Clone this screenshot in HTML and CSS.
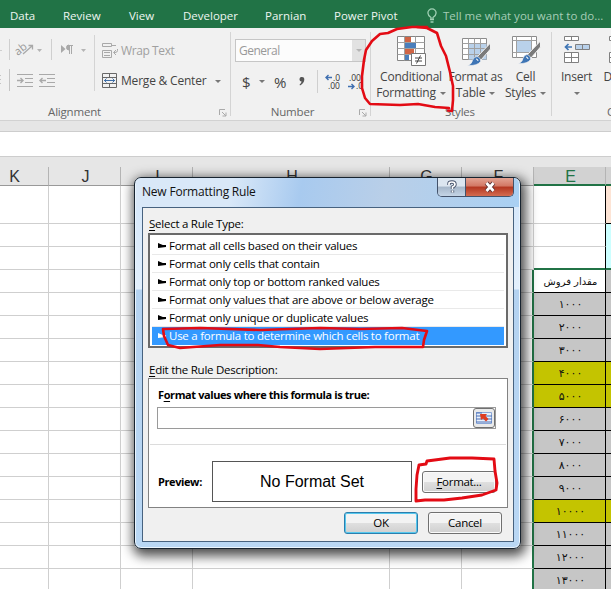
FILE: index.html
```html
<!DOCTYPE html>
<html lang="en">
<head>
<meta charset="utf-8">
<title>New Formatting Rule</title>
<link rel="stylesheet" href="styles.css">
</head>
<body>
<div class="app">
  <nav class="tabs">
    <span class="t-data">Data</span><span class="t-review">Review</span><span class="t-view">View</span><span class="t-dev">Developer</span><span class="t-parnian">Parnian</span><span class="t-pivot">Power Pivot</span>
    <svg class="bulb" width="16" height="16" viewBox="0 0 16 16" fill="none" stroke="#9fd0b4" stroke-width="1.3"><path d="M4 11V9.500C2 8 .9 7 .9 5a4.100 4.100 0 0 1 8.200 0c0 2-1.100 3-3.100 4.500V11M3 11.500h4M3.500 14h3"/></svg>
    <span class="tell">Tell me what you want to do...</span>
  </nav>

  <div class="ribbon">
    <section class="group alignment">
      <div class="controls">
        <div class="left">
          <div class="line">
            <svg width="94" height="30" viewBox="0 0 94 30" fill="none" stroke="#a9a9a9">
              <path d="M0 15.500h2M9.500 4v21M51.500 4v21" stroke="#cfcfcf"/>
              <text x="15" y="17" transform="rotate(-38 22 15)" class="ab">ab</text>
              <path d="M23 19l9-8M28.500 10.500h4v4" stroke-width="1.300"/>
              <path d="M37 14h5l-2.500 3zM81 14h5l-2.500 3z" fill="#b5b5b5" stroke="none"/>
              <path d="M61 10l4.500 4-4.500 4z" fill="#a9a9a9" stroke="none"/>
              <path d="M67 10.500h6M69.500 10v9M71.500 10v9"/><path d="M69 10a2.500 2.500 0 0 0 0 5z" fill="#a9a9a9"/>
            </svg>
          </div>
          <div class="line">
            <svg width="94" height="30" viewBox="0 0 94 30" fill="none" stroke="#a9a9a9">
              <path d="M0 10.500h1M0 14.500h1M0 18.500h1M9.500 4v22" stroke="#c4c4c4"/>
              <path d="M17 9.500h16M25 13.500h8M25 17.500h8M17 21.500h16M39 9.500h16M47 13.500h8M47 17.500h8M39 21.500h16"/>
              <path d="M17 15.500h6M20.500 13l2.500 2.500-2.500 2.500M46 15.500h-6M42.500 13L40 15.500l2.500 2.500" stroke-width="1.400"/>
            </svg>
          </div>
        </div>
        <div class="right">
          <div class="line disabled">
            <svg width="18" height="18" viewBox="0 0 18 18" fill="none" stroke="#a9a9a9"><path d="M1.500 1.500h9v3h-9zM1.500 8.500h9v7h-9zM3 10.500h6M3 13.500h6M11 3.500h4M16.500 7v1.500q0 2-2.500 2h-1M15 8l-2.500 2.500L15 13"/></svg>
            <span class="wrap-text">Wrap Text</span>
          </div>
          <div class="line">
            <svg width="18" height="18" viewBox="0 0 18 18" fill="none" stroke="#686868"><path d="M1.500 1.500h14v14h-14zM1.500 5.500h14M1.500 11.500h14M8.500 1.500v4M8.500 11.500v4"/><path d="M3 8.500h11M5.500 6.500l-2 2 2 2M11.500 6.500l2 2-2 2" stroke="#3f6fa8"/></svg>
            <span class="merge">Merge &amp; Center</span><i class="caret"></i>
          </div>
        </div>
      </div>
      <footer><span>Alignment</span><svg class="launcher" width="8" height="8" viewBox="0 0 8 8" fill="none" stroke="#aaa"><path d="M.5 6V.5H6M3 3l4 4M7 3.500V7H3.500"/></svg></footer>
    </section>

    <section class="group number">
      <div class="controls">
        <div class="combo"><span>General</span><b><i class="caret"></i></b></div>
        <div class="formats">
          <span class="dollar">$</span><i class="caret"></i><span class="percent">%</span><svg class="comma" width="6" height="9" viewBox="0 0 6 9"><path d="M3 0a2.300 2.300 0 0 1 2.300 2.500Q5.300 6 1 8.500L.6 7.500Q2.500 6 2.600 4.600A2.300 2.300 0 0 1 3 0z" fill="#555"/></svg><i class="rule"></i>
          <svg width="40" height="20" viewBox="0 0 40 20"><g class="dec"><text x="8" y="9">.0</text><text x="3" y="17">.00</text><text x="24" y="9">.00</text><text x="31" y="17">.0</text></g><path d="M7 5.500H1M3.500 3L1 5.500 3.500 8M23 14.500h6M26.500 12l2.500 2.500-2.500 2.500" fill="none" stroke="#3f6fb0" stroke-width="1.400"/></svg>
        </div>
      </div>
      <footer><span>Number</span><svg class="launcher" width="8" height="8" viewBox="0 0 8 8" fill="none" stroke="#aaa"><path d="M.5 6V.5H6M3 3l4 4M7 3.500V7H3.500"/></svg></footer>
    </section>

    <section class="group styles">
      <div class="controls">
        <div class="big cond">
          <svg width="32" height="32" viewBox="0 0 32 32"><path d="M2.500 1.500h27v24h-27z" fill="#fff" stroke="#858585"/><path d="M2.500 7.500h27M2.500 13.500h27M2.500 19.500h27M9.500 1.500v24M20.500 1.500v24" stroke="#a0a0a0"/><path d="M10 2h6v5h-6zM10 14h9v5h-9z" fill="#d06445"/><path d="M10 8h11v5H10zM10 20h4v5h-4z" fill="#4a7ebb"/><path d="M16.500 18.500h14v12h-14z" fill="#fff" stroke="#777"/><path d="M20 23h7M20 26h7M25.500 20.500l-4 8" stroke="#444" fill="none"/></svg>
          <span>Conditional</span><span>Formatting<i class="caret"></i></span>
        </div>
        <div class="big tbl">
          <svg width="32" height="32" viewBox="0 0 32 32"><path d="M3.500 3.500h24v21h-24z" fill="#fff" stroke="#8c8c8c"/><path d="M9.500 9h18v15.500h-18z" fill="#b9d1ea"/><path d="M3.500 8.500h24M3.500 13.500h24M3.500 19.500h24M9.500 3.500v21M15.500 3.500v21M21.500 3.500v21" stroke="#a0a0a0"/><path d="M31.500 8v6L22 25l-3.500-3.500z" fill="#7a7a7a" stroke="#f1f1f1"/><path d="M18 21.500q4 1 3.500 5-3 4.500-13 4 4.500-1.500 5-5 1-3.500 4.500-4z" fill="#3e75b5" stroke="#f1f1f1" stroke-width=".6"/><path d="M17 24q2 0 2 2" fill="none" stroke="#fff"/></svg>
          <span>Format as</span><span>Table<i class="caret"></i></span>
        </div>
        <div class="big cell">
          <svg width="32" height="32" viewBox="0 0 32 32"><path d="M3.500 1.500h24v21h-24z" fill="#fff" stroke="#8c8c8c"/><path d="M8 6h14v11H8z" fill="#b9d1ea"/><path d="M3.500 5.500h24M3.500 17.500h24M7.500 1.500v21M22.500 1.500v21" stroke="#a0a0a0"/><path d="M31.500 6v6L22 23l-3.500-3.500z" fill="#7a7a7a" stroke="#f1f1f1"/><path d="M18 19.500q4 1 3.500 5-3 4.500-12 4 4-1.500 4.500-5 1-3.500 4-4z" fill="#3e75b5" stroke="#f1f1f1" stroke-width=".6"/><path d="M17 22q2 0 2 2" fill="none" stroke="#fff"/></svg>
          <span>Cell</span><span>Styles<i class="caret"></i></span>
        </div>
      </div>
      <footer><span>Styles</span></footer>
    </section>

    <section class="group cells">
      <div class="controls">
        <div class="big insert">
          <svg width="32" height="32" viewBox="0 0 32 32" fill="#fff" stroke="#808080"><path d="M4.500 1.500h14v4h-14zM11.500 1.500v4M4.500 17.500h14v10h-14zM4.500 22.500h14M11.500 17.500v10"/><path d="M15.500 9.500h14v5h-14zM22.500 9.500v5" fill="#b9d1ea"/><path d="M12 12H6M8.500 9L5.500 12l3 3" fill="none" stroke="#3e75b5" stroke-width="1.700"/></svg>
          <span>Insert</span><span><i class="caret lone"></i></span>
        </div>
        <div class="big delete">
          <svg width="32" height="32" viewBox="0 0 32 32" fill="#fff" stroke="#808080"><path d="M4.500 1.500h14v4h-14zM4.500 17.500h14v10h-14zM4.500 22.500h14"/></svg>
          <span>Delete</span>
        </div>
      </div>
      <footer><span>Cells</span></footer>
    </section>
  </div>

  <div class="formula-bar"></div>

  <div class="sheet">
    <div class="row head"><i>K</i><i>J</i><i>I</i><i>H</i><i>G</i><i>F</i><i class="sel">E</i><i class="sel"></i></div>
    <div class="row tall"><i></i><i></i><i></i><i></i><i></i><i></i><i class="edge"></i><i class="peach"></i></div>
    <div class="row"><i></i><i></i><i></i><i></i><i></i><i></i><i class="edge"></i><i class="cyan"></i></div>
    <div class="row"><i></i><i></i><i></i><i></i><i></i><i></i><i class="edge last"></i><i class="cyan last"></i></div>
    <div class="row data title"><i></i><i></i><i></i><i></i><i></i><i></i><i lang="fa">مقدار فروش</i><i></i></div>
    <div class="row data"><i></i><i></i><i></i><i></i><i></i><i></i><i>۱۰۰۰</i><i></i></div>
    <div class="row data"><i></i><i></i><i></i><i></i><i></i><i></i><i>۲۰۰۰</i><i></i></div>
    <div class="row data"><i></i><i></i><i></i><i></i><i></i><i></i><i>۳۰۰۰</i><i></i></div>
    <div class="row data hit"><i></i><i></i><i></i><i></i><i></i><i></i><i>۴۰۰۰</i><i></i></div>
    <div class="row data hit"><i></i><i></i><i></i><i></i><i></i><i></i><i>۵۰۰۰</i><i></i></div>
    <div class="row data"><i></i><i></i><i></i><i></i><i></i><i></i><i>۶۰۰۰</i><i></i></div>
    <div class="row data"><i></i><i></i><i></i><i></i><i></i><i></i><i>۷۰۰۰</i><i></i></div>
    <div class="row data"><i></i><i></i><i></i><i></i><i></i><i></i><i>۸۰۰۰</i><i></i></div>
    <div class="row data"><i></i><i></i><i></i><i></i><i></i><i></i><i>۹۰۰۰</i><i></i></div>
    <div class="row data hit"><i></i><i></i><i></i><i></i><i></i><i></i><i>۱۰۰۰۰</i><i></i></div>
    <div class="row data"><i></i><i></i><i></i><i></i><i></i><i></i><i>۱۱۰۰۰</i><i></i></div>
    <div class="row data"><i></i><i></i><i></i><i></i><i></i><i></i><i>۱۲۰۰۰</i><i></i></div>
    <div class="row data"><i></i><i></i><i></i><i></i><i></i><i></i><i>۱۳۰۰۰</i><i></i></div>
  </div>

  <div class="dialog">
    <header>
      <h1>New Formatting Rule</h1>
      <div class="winbtns">
        <span class="help"><svg width="12" height="14" viewBox="0 0 12 14" fill="none"><path d="M3 5V3.500Q3 2 6 2t3 2.500Q9 6 6.500 7v2M6.500 10.500v2" stroke="#47536b" stroke-width="3.400"/><path d="M3 5V3.500Q3 2 6 2t3 2.500Q9 6 6.500 7v2M6.500 10.500v2" stroke="#fff" stroke-width="1.700"/></svg></span>
        <span class="close"><svg width="14" height="12" viewBox="0 0 14 12" fill="none"><path d="M3.500 2l7 8M10.500 2l-7 8" stroke="#5b3030" stroke-width="4.600"/><path d="M3.500 2l7 8M10.500 2l-7 8" stroke="#fff" stroke-width="2.700"/></svg></span>
      </div>
    </header>
    <div class="body">
      <p class="lbl select-label"><u>S</u>elect a Rule Type:</p>
      <ul class="rules">
        <li>Format all cells based on their values</li>
        <li>Format only cells that contain</li>
        <li>Format only top or bottom ranked values</li>
        <li>Format only values that are above or below average</li>
        <li>Format only unique or duplicate values</li>
        <li class="on">Use a formula to determine which cells to format</li>
      </ul>
      <p class="lbl edit-label"><u>E</u>dit the Rule Description:</p>
      <div class="desc">
        <p class="bold true">F<u>o</u>rmat values where this formula is true:</p>
        <div class="input"><span class="picker"><svg width="16" height="14" viewBox="0 0 16 14"><path d="M.5 1.500h15v11H.5z" fill="#e8f0fb" stroke="#8aa6d6"/><path d="M0 2h6M0 5h16M0 8h16M0 11h16" stroke="#4a6eb5" stroke-width="1.200"/><path d="M4 3h7L9.500 5l3 3-2.500 2.500-3-3L5 9z" fill="#df3c20"/></svg></span></div>
        <div class="preview">
          <span class="bold">Preview:</span>
          <div class="sample">No Format Set</div>
          <button class="fmt"><u>F</u>ormat...</button>
        </div>
      </div>
      <div class="actions"><button class="ok">OK</button><button class="cancel">Cancel</button></div>
    </div>
  </div>

  <svg class="ink" width="611" height="589" viewBox="0 0 611 589" fill="none" stroke="#e30b14" stroke-linecap="round" stroke-linejoin="round">
    <path stroke-width="2.600" d="M427 27L412 27L397 29L388 33L380 34L372 41L366 50L364 60L362 76L362 88L365 98L370 104L400 105L418 104L435 107L449 108"/>
    <path stroke-width="2.600" d="M417 27L427 28L437 33L441 46L446 56L450 72L453 86L453 100L452 111L448 110.500"/>
    <path stroke-width="2.600" d="M164 329L200 328L260 330L320 328L360 329L402 328L427 331L424 340L423 347L375 347L320 349L280 347L258 345L220 345L180 348L168 345L164 336L163 329"/>
    <path stroke-width="2.900" d="M419 465L426 464L427 461L450 458L472 458L494 459L495 471L497 483L496 490L482 495L462 498L444 500L425 500L416 501L416 489L417 475L419 465"/>
  </svg>
</div>
</body>
</html>
```
FILE: styles.css
```css
* { box-sizing: border-box; }
body { margin: 0; font: 12px/16px "Open Sans", "Noto Sans", sans-serif; color: #444; }
p, ul, h1 { margin: 0; padding: 0; }
i { font-style: normal; }
span, li, p, h1, button { white-space: nowrap; }
svg { display: block; flex: none; }
.app { position: relative; width: 611px; height: 589px; overflow: hidden; background: #e6e6e6; }

.tabs { display: flex; align-items: center; height: 28px; padding: 3px 0 0 10px; background: #217346; color: #eef6f1; font-size: 11.5px; }
.tabs span { flex: none; }
.t-data { width: 53px; }
.t-review { width: 66px; }
.t-view { width: 54px; }
.t-dev { width: 82px; }
.t-parnian { width: 69px; }
.t-pivot { width: 93px; }
.tabs .tell { color: #a6cdb6; }

.ribbon { display: flex; height: 93px; background: #f1f1f1; border-bottom: 1px solid #d2d2d2; overflow: hidden; }
.group { position: relative; flex: none; display: flex; flex-direction: column; padding-top: 7px; }
.group::after { content: ""; position: absolute; right: 0; top: 4px; height: 84px; width: 1px; background: #d4d4d4; }
.alignment { width: 231px; }
.number { width: 140px; }
.styles { width: 181px; }
.cells { width: 117px; }
.controls { height: 69px; }
footer { display: flex; align-items: center; justify-content: center; height: 16px; color: #666; font-size: 11.5px; letter-spacing: -.2px; position: relative; }
.alignment footer { padding-right: 82px; }
.number footer { padding-right: 0; padding-right: 17px; }
.styles footer { padding-right: 3px; }
.launcher { position: absolute; right: 4px; top: 5px; }
.caret { display: inline-block; flex: none; border: 3px solid transparent; border-top: 3px solid #777; border-bottom: 0; }
.alignment .controls { display: flex; }
.alignment .left { width: 95px; border-right: 1px solid #d4d4d4; height: 56px; }
.right { padding-left: 6px; }
.line { display: flex; align-items: center; height: 30px; }
.right .line { gap: 2px; padding-top: 1px; }
.right .line + .line { padding-top: 2px; }
.ab { font: 11px "Open Sans"; fill: #999; stroke: none; }
.disabled { color: #a0a0a0; }
.wrap-text { letter-spacing: -.4px; }
.merge { letter-spacing: -.2px; }
.merge + .caret { margin-left: 7px; }
.combo { display: flex; justify-content: space-between; width: 131px; height: 23px; margin: 4px 0 0 4px; border: 1px solid #c6c6c6; background: #fcfcfc; color: #999; line-height: 22px; padding-left: 3px; letter-spacing: -.5px; }
.combo b { width: 13px; background: #e2e2e2; display: flex; align-items: center; justify-content: center; }
.combo .caret { border-top-color: #b5b5b5; }
.formats { display: flex; align-items: center; height: 39px; padding-left: 11px; }
.dollar { width: 17px; font-size: 15px; }
.percent { width: 25px; margin-left: 9px; font-size: 15px; }
.comma { margin-right: 12px; }
.rule { width: 1px; height: 23px; background: #cfcfcf; margin-right: 7px; }
.dec { font: 8.500px "Open Sans"; fill: #333; }

.styles .controls, .cells .controls { display: flex; }
.big { flex: none; display: flex; flex-direction: column; align-items: center; letter-spacing: -.2px; }
.big svg { margin: 0 1px 2px 0; }
.big span { height: 16px; }
.big .caret { margin-left: 4px; vertical-align: 2px; }
.big .lone { margin-left: 0; }
.cond { width: 80px; }
.tbl { width: 49px; }
.cell { width: 51px; }
.insert { width: 49px; }
.delete { width: 40px; }
.cells footer { padding-left: 17px; }

.formula-bar { height: 26px; margin-top: 10px; background: #fff; border: solid #cdcdcd; border-width: 1px 0; }

.row { display: grid; grid-template-columns: 49px 72px 72px 197px 72px 72px 72px 5px; height: 23px; background: #fff; }
.row i { display: flex; align-items: center; justify-content: center; border: solid #cfcfcf; border-width: 0 1px 1px 0; }
.row i:last-child { border-right: 0; }
.row.tall { height: 38px; }
.row.head { height: 29px; background: #e6e6e6; align-items: end; }
.head i { height: 19px; font: 16px "Liberation Sans", sans-serif; color: #333; border-color: #b4b4b4; border-bottom-color: #999; padding: 2px 0 0 2px; }
.head i:first-child { padding-right: 21px; }
.row.head .sel { background: #d2d2d2; color: #217346; border-bottom: 2px solid #217346; }
.row .edge { border-right-color: #000; }
.row .peach { background: #fde4d5; border-color: #000; }
.row .cyan { background: #ccffff; border-bottom-color: #ccffff; }
.row .last { border-bottom: 2px solid #217346; }
.row.data i:nth-child(6) { border-right: 2px solid #217346; }
.row.data i:nth-child(n+7) { background: #c6c6c6; border-color: #000; color: #111; font: 11px "DejaVu Sans", sans-serif; padding-left: 2px; }
.row.data.title i:nth-child(7) { background: #fff; font-size: 10px; }
.row.hit i:nth-child(n+7) { background: #c4c400; }

.dialog { position: absolute; left: 134px; top: 177px; width: 387px; height: 372px; padding: 0 7px 7px; border: 1px solid #17232f; border-radius: 7px; background: linear-gradient(#d3e6fa 0, #e2effc 111px, #b4d2f0 112px, #b9d7f4 100%); box-shadow: inset 0 0 0 1px #eaf4fd, 2px 4px 12px 3px rgba(0,0,0,.7); }
.dialog header { display: flex; height: 29px; justify-content: space-between; background: linear-gradient(100deg, #d9e8f8 0 25%, #a8caef 43%, #b9cfe8 65%, #a9d0f3); margin: 0 -6px; padding-left: 6px; border-radius: 6px 6px 0 0; }
.dialog h1 { font-size: 12px; font-weight: 400; color: #111; line-height: 28px; letter-spacing: -.2px; }
.winbtns { display: flex; height: 19px; margin-right: 5px; border: 1px solid #43526a; border-top: 0; border-radius: 0 0 5px 5px; overflow: hidden; }
.winbtns span { display: flex; align-items: center; justify-content: center; }
.help { width: 28px; border-right: 1px solid #43526a; background: linear-gradient(#dce6f0 0 45%, #a5b6c9 50%, #c5d5e6); }
.close { width: 47px; background: linear-gradient(#e3a393 0, #d27763 45%, #b33620 50%, #d46c50); }
.body { height: 335px; width: 372px; background: #f0f0f0; border: 1px solid #47627f; padding: 7px 5px 0; color: #000; font-size: 11.5px; letter-spacing: -.25px; }
.body u { text-underline-offset: 2px; }
.lbl { height: 18px; line-height: 18px; padding-left: 1px; }
.rules { height: 115px; width: 360px; border: 2px solid #6a6a6a; background: #fff; padding: 2px; list-style: none; }
.rules li { height: 18px; display: flex; align-items: center; border-bottom: 1px solid #e9e9e9; }
.rules li::before { content: ""; width: 8px; height: 5px; margin: 0 3px 0 6px; background: currentColor; clip-path: polygon(0 0, 60% 40%, 100% 40%, 100% 80%, 0 100%); }
.rules .on { background: #3399ff; color: #fff; border-color: #3399ff; }
.edit-label { margin-top: 13px; height: 17px; }
.desc { width: 360px; height: 130px; border: 1px solid #828282; background: #fff; padding: 8px 1px 0; }
.bold { font-weight: 700; font-size: 11px; letter-spacing: -.4px; }
.true { padding-left: 8px; }
.input { display: flex; justify-content: flex-end; width: 339px; height: 22px; margin: 4px 0 15px 7px; border: 1px solid #9a9a9a; }
.picker { width: 22px; height: 20px; display: flex; align-items: center; justify-content: center; border: 1px solid #707070; border-radius: 3px; background: #eaeaea; }
.preview { display: flex; align-items: center; border-top: 1px solid #dcdcdc; padding: 16px 0 0 8px; }
.preview > .bold { width: 54px; }
.sample { width: 200px; height: 41px; border: 1px solid #555; text-align: center; font: 16px/40px "Liberation Sans", sans-serif; letter-spacing: 0; margin-right: 10px; }
button { width: 74px; height: 22px; padding: 0; border: 1px solid #707070; border-radius: 3px; font: 11.5px/18px "Open Sans", sans-serif; letter-spacing: -.3px; color: #000; background: linear-gradient(#f3f3f3 0 48%, #dfdfdf 52%, #d0d0d0); box-shadow: inset 0 0 0 1px #fafafa; }
.actions { display: flex; gap: 10px; justify-content: flex-end; padding: 4px 6px 0 0; }
.ok { border-color: #2b7fae; box-shadow: inset 0 0 0 1px #56c8ee; }
.ink { position: absolute; left: 0; top: 0; }
```
